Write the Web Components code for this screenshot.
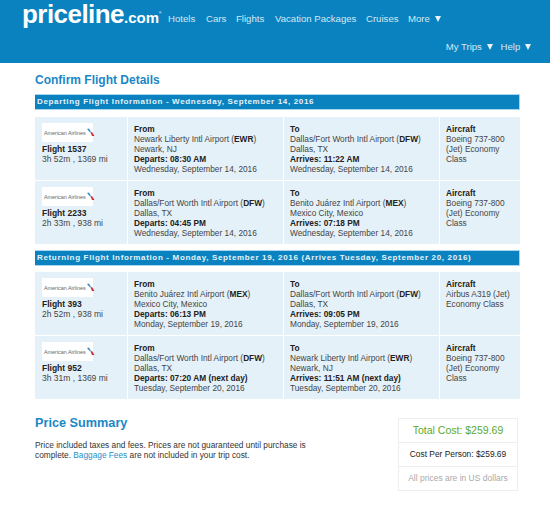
<!DOCTYPE html>
<html lang="en">
<head>
<meta charset="utf-8">
<title>Confirm Flight Details</title>
<style>
  html, body { margin: 0; padding: 0; background: #fff; }
  body { font-family: "Liberation Sans", Arial, sans-serif; font-size: 9px; color: #333; }
  main { display: block; padding: 0 30px 0 35px; }
</style>
</head>
<body>
<site-header></site-header>
<main>
  <section-title style="--top: 9px">Confirm Flight Details</section-title>

  <flight-group style="--rows-gap: 7px" heading="Departing Flight Information - Wednesday, September 14, 2016">
    <flight-row flight="1537" stats="3h 52m , 1369 mi"
      from-airport="Newark Liberty Intl Airport" from-code="EWR" from-city="Newark, NJ" departs="08:30 AM" from-date="Wednesday, September 14, 2016"
      to-airport="Dallas/Fort Worth Intl Airport" to-code="DFW" to-city="Dallas, TX" arrives="11:22 AM" to-date="Wednesday, September 14, 2016"
      aircraft="Boeing 737-800 (Jet) Economy Class"></flight-row>
    <flight-row flight="2233" stats="2h 33m , 938 mi"
      from-airport="Dallas/Fort Worth Intl Airport" from-code="DFW" from-city="Dallas, TX" departs="04:45 PM" from-date="Wednesday, September 14, 2016"
      to-airport="Benito Juárez Intl Airport" to-code="MEX" to-city="Mexico City, Mexico" arrives="07:18 PM" to-date="Wednesday, September 14, 2016"
      aircraft="Boeing 737-800 (Jet) Economy Class"></flight-row>
  </flight-group>

  <flight-group heading="Returning Flight Information - Monday, September 19, 2016 (Arrives Tuesday, September 20, 2016)">
    <flight-row flight="393" stats="2h 52m , 938 mi"
      from-airport="Benito Juárez Intl Airport" from-code="MEX" from-city="Mexico City, Mexico" departs="06:13 PM" from-date="Monday, September 19, 2016"
      to-airport="Dallas/Fort Worth Intl Airport" to-code="DFW" to-city="Dallas, TX" arrives="09:05 PM" to-date="Monday, September 19, 2016"
      aircraft="Airbus A319 (Jet) Economy Class"></flight-row>
    <flight-row flight="952" stats="3h 31m , 1369 mi"
      from-airport="Dallas/Fort Worth Intl Airport" from-code="DFW" from-city="Dallas, TX" departs="07:20 AM (next day)" from-date="Tuesday, September 20, 2016"
      to-airport="Newark Liberty Intl Airport" to-code="EWR" to-city="Newark, NJ" arrives="11:51 AM (next day)" to-date="Tuesday, September 20, 2016"
      aircraft="Boeing 737-800 (Jet) Economy Class"></flight-row>
  </flight-group>

  <price-summary></price-summary>
</main>

<script>
class SiteHeader extends HTMLElement {
  constructor() {
    super();
    this.attachShadow({ mode: 'open' });
  }

  connectedCallback() {
    this.shadowRoot.innerHTML = `
      <style>
        :host {
          display: block;
          height: 63px;
          background: #0a82c0;
          color: #d5e8f3;
          font-size: 9.6px;
          box-sizing: border-box;
          padding: 0 0 0 22px;
        }
        .top {
          display: flex;
          align-items: flex-start;
          height: 40px;
        }
        .logo {
          color: #fff;
          font-weight: bold;
          font-size: 26px;
          line-height: 28px;
          letter-spacing: -0.55px;
          width: 146px;
          white-space: nowrap;
        }
        .logo small {
          font-size: 15px;
          letter-spacing: 0;
        }
        .logo sup {
          font-size: 3px;
          vertical-align: 9px;
          line-height: 0;
        }
        nav {
          display: flex;
          padding-top: 13px;
          white-space: nowrap;
          line-height: 12px;
        }
        .bottom {
          display: flex;
          justify-content: flex-end;
          gap: 8px;
          padding-right: 19px;
          padding-top: 1px;
          line-height: 12px;
        }
        .tri {
          display: inline-block;
          width: 0;
          height: 0;
          margin-left: 2px;
          border-left: 3.5px solid transparent;
          border-right: 3.5px solid transparent;
          border-top: 6px solid #e8f3f9;
        }
        nav span:nth-child(1) { width: 38px; }
        nav span:nth-child(2) { width: 30px; }
        nav span:nth-child(3) { width: 39px; }
        nav span:nth-child(4) { width: 91px; }
        nav span:nth-child(5) { width: 42px; }
      </style>
      <div class="top">
        <div class="logo">priceline<small>.com</small><sup>®</sup></div>
        <nav>
          <span>Hotels</span><span>Cars</span><span>Flights</span><span>Vacation Packages</span><span>Cruises</span>
          <span>More <i class="tri"></i></span>
        </nav>
      </div>
      <div class="bottom">
        <span>My Trips <i class="tri"></i></span>
        <span>Help <i class="tri"></i></span>
      </div>
    `;
  }
}

class SectionTitle extends HTMLElement {
  constructor() {
    super();
    this.attachShadow({ mode: 'open' });
    this.shadowRoot.innerHTML = `
      <style>
        :host {
          display: block;
          padding-top: var(--top, 0);
          color: #1a87c6;
          font-weight: bold;
          font-size: 12px;
          line-height: 16px;
        }
      </style>
      <slot></slot>
    `;
  }
}

class FlightGroup extends HTMLElement {
  constructor() {
    super();
    this.attachShadow({ mode: 'open' });
  }

  connectedCallback() {
    this.shadowRoot.innerHTML = `
      <style>
        :host {
          display: block;
          margin-top: 6px;
        }
        .bar {
          box-sizing: border-box;
          background: #0a82c0;
          border: 1px solid #a9d6ee;
          border-left: 0;
          color: #e6f2f9;
          font-weight: bold;
          font-size: 8px;
          letter-spacing: 0.66px;
          line-height: 14px;
          height: 16px;
          padding-left: 2px;
          white-space: nowrap;
          overflow: hidden;
        }
        .rows {
          display: flex;
          flex-direction: column;
          gap: 1px;
          margin-top: var(--rows-gap, 6px);
        }
      </style>
      <div class="bar"></div>
      <div class="rows"><slot></slot></div>
    `;
    this.shadowRoot.querySelector('.bar').textContent = this.getAttribute('heading');
  }
}

class FlightRow extends HTMLElement {
  constructor() {
    super();
    this.attachShadow({ mode: 'open' });
  }

  connectedCallback() {
    const a = (n) => this.getAttribute(n);
    this.shadowRoot.innerHTML = `
      <style>
        :host {
          display: grid;
          grid-template-columns: 92px 155px 155px 1fr;
          column-gap: 1px;
          height: 63px;
          font-size: 8.3px;
          line-height: 10px;
          color: #444;
        }
        .cell {
          background: #e5f1f9;
          padding: 7px 0 0 6px;
          white-space: nowrap;
        }
        .cell.plane {
          padding: 6px 0 0 7px;
          font-size: 8.5px;
        }
        .aircraft { white-space: normal; padding-right: 4px; }
        b { color: #222; }
        .logo {
          display: flex;
          align-items: center;
          box-sizing: border-box;
          width: 51px;
          height: 19px;
          background: #fff;
          padding-left: 2px;
          margin-bottom: 2px;
          color: #666;
          font-size: 5.4px;
          white-space: nowrap;
        }
        svg { display: block; flex: none; margin-top: -1px; }
      </style>
      <div class="cell plane">
        <div class="logo">
          <span>American Airlines</span>
          <svg width="9" height="9" viewBox="0 0 9 9">
            <path d="M1 1 3 .5 5 4 4 4.500z" fill="#3b8fc4"/>
            <path d="M4.500 4.500 6 4 8.500 8 6 8z" fill="#c8323a"/>
          </svg>
        </div>
        <b>Flight ${a('flight')}</b><br>${a('stats')}
      </div>
      <div class="cell">
        <b>From</b><br>${a('from-airport')} (<b>${a('from-code')}</b>)<br>${a('from-city')}<br>
        <b>Departs: ${a('departs')}</b><br>${a('from-date')}
      </div>
      <div class="cell">
        <b>To</b><br>${a('to-airport')} (<b>${a('to-code')}</b>)<br>${a('to-city')}<br>
        <b>Arrives: ${a('arrives')}</b><br>${a('to-date')}
      </div>
      <div class="cell aircraft">
        <b>Aircraft</b><br>${a('aircraft')}
      </div>
    `;
  }
}

class PriceSummary extends HTMLElement {
  constructor() {
    super();
    this.attachShadow({ mode: 'open' });
  }

  connectedCallback() {
    this.shadowRoot.innerHTML = `
      <style>
        :host {
          display: flex;
          justify-content: space-between;
          align-items: flex-start;
          margin-top: 16px;
        }
        .left { width: 280px; }
        h2 {
          margin: 0 0 9px;
          color: #1a87c6;
          font-size: 12.7px;
          line-height: 16px;
        }
        p {
          margin: 0;
          font-size: 8.3px;
          line-height: 10px;
          color: #333;
        }
        a { color: #2a8fc9; text-decoration: none; }
        .box {
          width: 118px;
          margin: 3px 2px 0 0;
          text-align: center;
          display: flex;
          flex-direction: column;
          gap: 1px;
          background: #eee;
          border: 1px solid #eee;
        }
        .box div { background: #fff; }
        .total { color: #5aaa2c; font-size: 10.5px; line-height: 23px; height: 23px; }
        .each { color: #222; font-size: 8.4px; line-height: 23px; height: 23px; }
        .note { color: #aaa; font-size: 8.5px; line-height: 23px; height: 23px; }
      </style>
      <div class="left">
        <h2>Price Summary</h2>
        <p>Price included taxes and fees. Prices are not guaranteed until purchase is<br>complete. <a href="#">Baggage Fees</a> are not included in your trip cost.</p>
      </div>
      <div class="box">
        <div class="total">Total Cost: $259.69</div>
        <div class="each">Cost Per Person: $259.69</div>
        <div class="note">All prices are in US dollars</div>
      </div>
    `;
  }
}

customElements.define('site-header', SiteHeader);
customElements.define('section-title', SectionTitle);
customElements.define('flight-group', FlightGroup);
customElements.define('flight-row', FlightRow);
customElements.define('price-summary', PriceSummary);
</script>
</body>
</html>
